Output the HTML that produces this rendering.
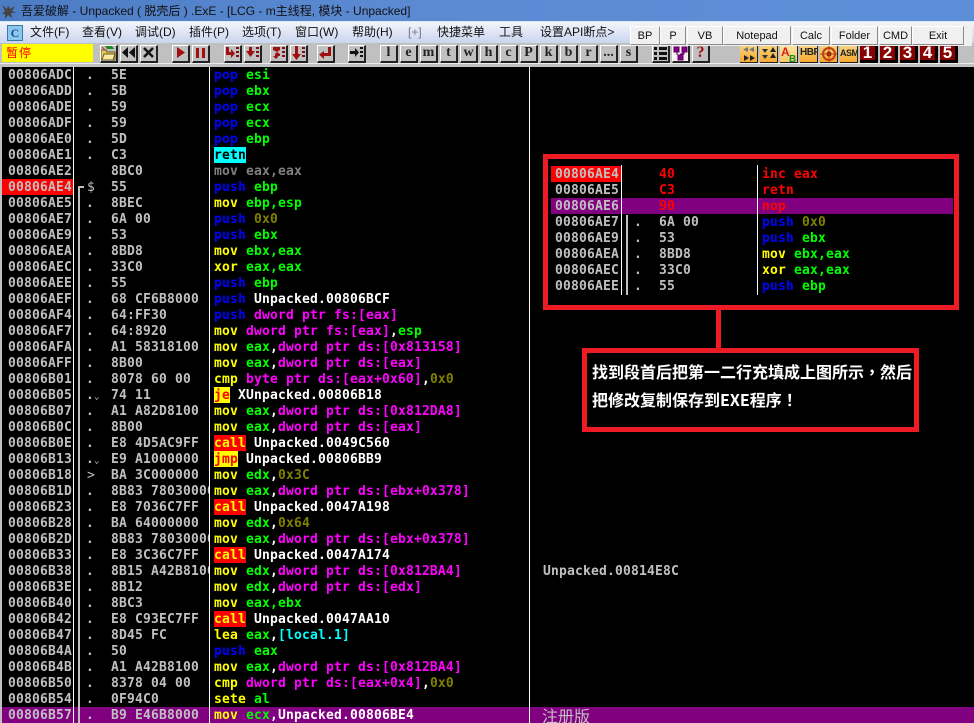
<!DOCTYPE html>
<html><head><meta charset="utf-8"><style>
html,body{margin:0;padding:0}
body{width:974px;height:723px;overflow:hidden;position:relative;background:#c0c0c0;font-family:"Liberation Sans","Noto Sans CJK SC",sans-serif}
.a{position:absolute}
#title{left:0;top:0;width:974px;height:21px;background:linear-gradient(90deg,#4c7cc4,#5b8ad2 40%,#5c8fd8);color:#111;font-size:12px;line-height:22px;white-space:pre}
#menu{left:0;top:21px;width:974px;height:22px;background:linear-gradient(#f2f5fb,#c9d5ef);border-top:1px solid #dfe8f5;box-sizing:border-box;font-size:12px;color:#111}
#menu span{position:absolute;top:1px;white-space:nowrap;line-height:18px}
#tb{left:0;top:43px;width:974px;height:24px;background:#c0c0c0}
#st{left:2px;top:44px;width:91px;height:18px;background:#ff0;color:#f00;font-size:12px;line-height:18px;text-indent:4px;letter-spacing:1px}
.btn{position:absolute;top:45px;width:18px;height:18px;box-sizing:border-box;background:#c0c0c0;border-style:solid;border-width:1px 2px 2px 1px;border-color:#fff #222 #222 #fff;font:bold 14px/14px "Liberation Serif",serif;color:#222;text-align:center;overflow:hidden}
.btn svg{position:absolute;left:0;top:0}
.ic{position:absolute;top:45px;width:18px;height:18px;box-sizing:border-box;background:linear-gradient(#f6d680,#f7a830);border-right:1px solid #222;border-bottom:1px solid #222;overflow:hidden;font:bold 10px/16px "Liberation Sans",sans-serif;letter-spacing:-.5px;color:#222;text-align:center}
.num{position:absolute;top:45px;width:18px;height:18px;box-sizing:border-box;background:#800;border-right:3px solid #000;border-bottom:3px solid #000;color:#fff;font:bold 17px/15px "Liberation Sans",sans-serif;text-align:center}
#bar{left:630px;top:25px;width:342px;height:21px;background:#f0f0f0}
.tbn{position:absolute;top:26px;height:19px;box-sizing:border-box;background:#f0f0f0;border:1px solid;border-color:#fff #8a8a8a #8a8a8a #fff;font-size:11px;line-height:19px;text-align:center;color:#111}
#main{left:2px;top:67px;width:972px;height:656px;background:#000;overflow:hidden}
.m,.m *{font-family:"DejaVu Sans Mono","Liberation Mono",monospace;font-weight:bold;font-size:13px;letter-spacing:.17px}
.r{position:absolute;left:0;width:972px;height:16px;line-height:18px;white-space:pre;color:#c0c0c0}
.r b{position:absolute;left:6px;top:0}
.r i{position:absolute;left:84px;top:0;font-style:normal}
.r u{position:absolute;left:109px;top:0;width:98px;height:16px;overflow:hidden;text-decoration:none}
.r em{position:absolute;left:212px;top:0;font-style:normal}
.g{color:#0f0}.l{color:#00f}.y{color:#ff0}.p{color:#f0f}.o{color:#808000}.c{color:#0ff}.w{color:#fff}.d{color:#808080}.e{color:#f00}
.cl{background:#f00;color:#ff0;display:inline-block;height:16px}
.jm{background:#ff0;color:#f00;display:inline-block;height:16px}
.rt{background:#0ff;color:#000;display:inline-block;height:16px}
.v{position:absolute;background:#fff;width:1px}
.box{position:absolute;box-sizing:border-box;border:5px solid #ed1c24}
</style></head><body>
<div class="a" id="title"><svg class="a" style="left:1px;top:3px" width="16" height="16" viewBox="0 0 16 16"><path d="M1 2l5 4 1-4 2 4 5-3-3 5 4 2-5 0 1 5-4-3-3 4 0-5-3 0 3-3z" fill="#444"/></svg><span class="a" style="left:21px;top:0">吾爱破解 - Unpacked ( 脱壳后 ) .ExE - [LCG - m主线程, 模块 - Unpacked]</span></div>
<div class="a" id="menu">
<svg class="a" style="left:7px;top:3px" width="16" height="16"><rect x=".5" y=".5" width="15" height="15" fill="#8cc8ec" stroke="#3a78b0"/><text x="8" y="12" font-family="Liberation Serif" font-weight="bold" font-size="12" text-anchor="middle" fill="#1a4a90">C</text></svg>
<span style="left:30px">文件(F)</span><span style="left:82px">查看(V)</span><span style="left:135px">调试(D)</span><span style="left:189px">插件(P)</span><span style="left:242px">选项(T)</span><span style="left:295px">窗口(W)</span><span style="left:352px">帮助(H)</span><span style="left:408px;color:#778">[+]</span><span style="left:437px">快捷菜单</span><span style="left:499px">工具</span><span style="left:540px">设置API断点&gt;</span>
</div>
<div class="a" id="tb"></div>
<div class="a" style="left:0;top:63px;width:974px;height:1px;background:#ececec"></div>
<div class="a" id="st">暂停</div>
<div class="btn" style="left:100px"><svg width="15" height="15"><path d="M0 4h5l1 2h8v8H0z" fill="#e8c860" stroke="#6a5a20"/><path d="M1 14l2-6h11l-2 6z" fill="#f8e8a0" stroke="#6a5a20"/><path d="M4 0h7l2 3H6z" fill="#1a8a20"/><path d="M1 1l3 3" stroke="#e02020"/></svg></div>
<div class="btn" style="left:120px"><svg width="15" height="15"><path d="M7 1v11L1 6.500zM14 1v11L8 6.500z" fill="#111"/></svg></div>
<div class="btn" style="left:140px"><svg width="15" height="15"><path d="M3 2l9 9M12 2l-9 9" stroke="#111" stroke-width="2.500"/></svg></div>
<div class="btn" style="left:172px"><svg width="15" height="15"><path d="M4 1v11l8-5.500z" fill="#a01010"/></svg></div>
<div class="btn" style="left:192px"><svg width="15" height="15"><path d="M3 2h3v10H3zM9 2h3v10H9z" fill="#a01010"/></svg></div>
<div class="btn" style="left:224px"><svg width="15" height="15"><path d="M1 1h3v5h2V3l4 4.500-4 4.500V9H1z" fill="#a01010"/><path d="M11 1h3v2h-3zM11 5h3v2h-3zM11 9h3v2h-3z" fill="#801010"/></svg></div>
<div class="btn" style="left:244px"><svg width="15" height="15"><path d="M4 1h3v4h3L5.500 11 1 5h3z" fill="#a01010"/><path d="M11 1h3v2h-3zM11 5h3v2h-3zM11 9h3v2h-3z" fill="#801010"/></svg></div>
<div class="btn" style="left:270px"><svg width="15" height="15"><path d="M2 1h7v3L6 6l3 2v2H7v1l-2 2-3-3h2V8l2-2-4-2z" fill="#a01010"/><path d="M11 1h3v2h-3zM11 5h3v2h-3zM11 9h3v2h-3z" fill="#801010"/></svg></div>
<div class="btn" style="left:290px"><svg width="15" height="15"><path d="M4 0h3v8h3l-4.500 6L1 8h3z" fill="#a01010"/><path d="M11 1h3v2h-3zM11 5h3v2h-3zM11 9h3v2h-3z" fill="#801010"/></svg></div>
<div class="btn" style="left:317px"><svg width="15" height="15"><path d="M10 1h3v9H6v3L1 8.500 6 5v2h4z" fill="#a01010"/></svg></div>
<div class="btn" style="left:348px"><svg width="15" height="15"><path d="M1 5h5V2l4 4.500L6 11V8H1z" fill="#111"/><path d="M11 1h3v2h-3zM11 5h3v2h-3zM11 9h3v2h-3z" fill="#111"/></svg></div>
<div class="btn" style="left:380px">l</div><div class="btn" style="left:400px">e</div><div class="btn" style="left:420px">m</div><div class="btn" style="left:440px">t</div><div class="btn" style="left:460px">w</div><div class="btn" style="left:480px">h</div><div class="btn" style="left:500px">c</div><div class="btn" style="left:520px">P</div><div class="btn" style="left:540px">k</div><div class="btn" style="left:560px">b</div><div class="btn" style="left:580px">r</div><div class="btn" style="left:600px">...</div><div class="btn" style="left:620px">s</div>
<div class="btn" style="left:652px"><svg width="15" height="15"><path d="M1 1h3v3H1zM6 1h8v3H6zM1 6h3v3H1zM6 6h8v3H6zM1 11h3v3H1zM6 11h8v3H6z" fill="#111"/></svg></div>
<div class="btn" style="left:672px;background:#f4f0f4"><svg width="15" height="15"><path d="M1 1h5v5H1zM9 1h5v5H9zM5 9h5v5H5zM4 6v3M11 6v2H7" fill="#800080" stroke="#600060"/></svg></div>
<div class="btn" style="left:692px;color:#a01010;font-size:16px">?</div>
<div class="ic" style="left:740px"><svg width="18" height="18"><path d="M8 2v5L3 4.500zM14 2v5L9 4.500z" fill="#777"/><path d="M4 10v6l5-3zM10 10v6l5-3z" fill="#222"/></svg></div>
<div class="ic" style="left:760px"><svg width="18" height="18"><path d="M2 4h6l-3 4zM2 10h6l-3 4z" fill="#333"/><path d="M13 2l3 5h-6zM13 8l3 5h-6z" fill="#222"/></svg></div>
<div class="ic" style="left:780px;background:linear-gradient(#fbe6a8,#f7c860)"><svg width="18" height="18"><text x="1" y="11" font-family="Liberation Sans" font-size="12" fill="#e02020">A</text><text x="9" y="17" font-family="Liberation Sans" font-weight="bold" font-size="10" fill="#109030">B</text></svg></div>
<div class="ic" style="left:800px">HBP</div>
<div class="ic" style="left:820px"><svg width="18" height="18"><circle cx="9" cy="9" r="6" fill="none" stroke="#c04010" stroke-width="2"/><circle cx="9" cy="9" r="2.500" fill="#701000"/><path d="M0 9h18M9 1v16" stroke="#c04010"/></svg></div>
<div class="ic" style="left:840px;font-size:9px">ASM</div>
<div class="num" style="left:860px">1</div><div class="num" style="left:880px">2</div><div class="num" style="left:900px">3</div><div class="num" style="left:920px">4</div><div class="num" style="left:940px">5</div>
<div class="a" id="bar"></div>
<div class="tbn" style="left:630px;width:30px">BP</div><div class="tbn" style="left:660px;width:26px">P</div><div class="tbn" style="left:687px;width:36px">VB</div><div class="tbn" style="left:723px;width:68px">Notepad</div><div class="tbn" style="left:792px;width:38px">Calc</div><div class="tbn" style="left:831px;width:47px">Folder</div><div class="tbn" style="left:879px;width:33px">CMD</div><div class="tbn" style="left:912px;width:52px">Exit</div>

<div class="a m" id="main">
<div class="a" style="left:0;top:112px;width:71px;height:16px;background:#f00"></div>
<div class="a" style="left:0;top:640px;width:972px;height:16px;background:#800080"></div>
<div class="v" style="left:71px;top:0;height:656px"></div>
<div class="v" style="left:207px;top:0;height:656px"></div>
<div class="v" style="left:527px;top:0;height:656px"></div>
<div class="a" style="left:76px;top:119px;width:2px;height:537px;background:#c0c0c0"></div>
<div class="a" style="left:76px;top:119px;width:6px;height:2px;background:#c0c0c0"></div>

<div class="r" style="top:0"><b>00806ADC</b><i>.</i><u>5E</u><em><span class="l">pop</span> <span class="g">esi</span></em></div>
<div class="r" style="top:16px"><b>00806ADD</b><i>.</i><u>5B</u><em><span class="l">pop</span> <span class="g">ebx</span></em></div>
<div class="r" style="top:32px"><b>00806ADE</b><i>.</i><u>59</u><em><span class="l">pop</span> <span class="g">ecx</span></em></div>
<div class="r" style="top:48px"><b>00806ADF</b><i>.</i><u>59</u><em><span class="l">pop</span> <span class="g">ecx</span></em></div>
<div class="r" style="top:64px"><b>00806AE0</b><i>.</i><u>5D</u><em><span class="l">pop</span> <span class="g">ebp</span></em></div>
<div class="r" style="top:80px"><b>00806AE1</b><i>.</i><u>C3</u><em><span class="rt">retn</span></em></div>
<div class="r" style="top:96px"><b>00806AE2</b><u>8BC0</u><em><span class="d">mov eax,eax</span></em></div>
<div class="r" style="top:112px"><b>00806AE4</b><i style="left:85px;font-weight:normal">$</i><u>55</u><em><span class="l">push</span> <span class="g">ebp</span></em></div>
<div class="r" style="top:128px"><b>00806AE5</b><i>.</i><u>8BEC</u><em><span class="y">mov</span> <span class="g">ebp,esp</span></em></div>
<div class="r" style="top:144px"><b>00806AE7</b><i>.</i><u>6A 00</u><em><span class="l">push</span> <span class="o">0x0</span></em></div>
<div class="r" style="top:160px"><b>00806AE9</b><i>.</i><u>53</u><em><span class="l">push</span> <span class="g">ebx</span></em></div>
<div class="r" style="top:176px"><b>00806AEA</b><i>.</i><u>8BD8</u><em><span class="y">mov</span> <span class="g">ebx,eax</span></em></div>
<div class="r" style="top:192px"><b>00806AEC</b><i>.</i><u>33C0</u><em><span class="y">xor</span> <span class="g">eax,eax</span></em></div>
<div class="r" style="top:208px"><b>00806AEE</b><i>.</i><u>55</u><em><span class="l">push</span> <span class="g">ebp</span></em></div>
<div class="r" style="top:224px"><b>00806AEF</b><i>.</i><u>68 CF6B8000</u><em><span class="l">push</span> <span class="w">Unpacked.00806BCF</span></em></div>
<div class="r" style="top:240px"><b>00806AF4</b><i>.</i><u>64:FF30</u><em><span class="l">push</span> <span class="p">dword ptr fs:[eax]</span></em></div>
<div class="r" style="top:256px"><b>00806AF7</b><i>.</i><u>64:8920</u><em><span class="y">mov</span> <span class="p">dword ptr fs:[eax]</span><span class="w">,</span><span class="g">esp</span></em></div>
<div class="r" style="top:272px"><b>00806AFA</b><i>.</i><u>A1 58318100</u><em><span class="y">mov</span> <span class="g">eax</span><span class="w">,</span><span class="p">dword ptr ds:[0x813158]</span></em></div>
<div class="r" style="top:288px"><b>00806AFF</b><i>.</i><u>8B00</u><em><span class="y">mov</span> <span class="g">eax</span><span class="w">,</span><span class="p">dword ptr ds:[eax]</span></em></div>
<div class="r" style="top:304px"><b>00806B01</b><i>.</i><u>8078 60 00</u><em><span class="y">cmp</span> <span class="p">byte ptr ds:[eax+0x60]</span><span class="w">,</span><span class="o">0x0</span></em></div>
<div class="r" style="top:320px"><b>00806B05</b><i>.<span style="font-size:9px;font-weight:normal">⌄</span></i><u>74 11</u><em><span class="jm">je</span> <span class="w">XUnpacked.00806B18</span></em></div>
<div class="r" style="top:336px"><b>00806B07</b><i>.</i><u>A1 A82D8100</u><em><span class="y">mov</span> <span class="g">eax</span><span class="w">,</span><span class="p">dword ptr ds:[0x812DA8]</span></em></div>
<div class="r" style="top:352px"><b>00806B0C</b><i>.</i><u>8B00</u><em><span class="y">mov</span> <span class="g">eax</span><span class="w">,</span><span class="p">dword ptr ds:[eax]</span></em></div>
<div class="r" style="top:368px"><b>00806B0E</b><i>.</i><u>E8 4D5AC9FF</u><em><span class="cl">call</span> <span class="w">Unpacked.0049C560</span></em></div>
<div class="r" style="top:384px"><b>00806B13</b><i>.<span style="font-size:9px;font-weight:normal">⌄</span></i><u>E9 A1000000</u><em><span class="jm">jmp</span> <span class="w">Unpacked.00806BB9</span></em></div>
<div class="r" style="top:400px"><b>00806B18</b><i style="font-weight:normal;left:85px">&gt;</i><u>BA 3C000000</u><em><span class="y">mov</span> <span class="g">edx</span><span class="w">,</span><span class="o">0x3C</span></em></div>
<div class="r" style="top:416px"><b>00806B1D</b><i>.</i><u>8B83 78030000</u><em><span class="y">mov</span> <span class="g">eax</span><span class="w">,</span><span class="p">dword ptr ds:[ebx+0x378]</span></em></div>
<div class="r" style="top:432px"><b>00806B23</b><i>.</i><u>E8 7036C7FF</u><em><span class="cl">call</span> <span class="w">Unpacked.0047A198</span></em></div>
<div class="r" style="top:448px"><b>00806B28</b><i>.</i><u>BA 64000000</u><em><span class="y">mov</span> <span class="g">edx</span><span class="w">,</span><span class="o">0x64</span></em></div>
<div class="r" style="top:464px"><b>00806B2D</b><i>.</i><u>8B83 78030000</u><em><span class="y">mov</span> <span class="g">eax</span><span class="w">,</span><span class="p">dword ptr ds:[ebx+0x378]</span></em></div>
<div class="r" style="top:480px"><b>00806B33</b><i>.</i><u>E8 3C36C7FF</u><em><span class="cl">call</span> <span class="w">Unpacked.0047A174</span></em></div>
<div class="r" style="top:496px"><b>00806B38</b><i>.</i><u>8B15 A42B8100</u><em><span class="y">mov</span> <span class="g">edx</span><span class="w">,</span><span class="p">dword ptr ds:[0x812BA4]</span></em></div>
<div class="r" style="top:512px"><b>00806B3E</b><i>.</i><u>8B12</u><em><span class="y">mov</span> <span class="g">edx</span><span class="w">,</span><span class="p">dword ptr ds:[edx]</span></em></div>
<div class="r" style="top:528px"><b>00806B40</b><i>.</i><u>8BC3</u><em><span class="y">mov</span> <span class="g">eax,ebx</span></em></div>
<div class="r" style="top:544px"><b>00806B42</b><i>.</i><u>E8 C93EC7FF</u><em><span class="cl">call</span> <span class="w">Unpacked.0047AA10</span></em></div>
<div class="r" style="top:560px"><b>00806B47</b><i>.</i><u>8D45 FC</u><em><span class="y">lea</span> <span class="g">eax</span><span class="w">,</span><span class="c">[local.1]</span></em></div>
<div class="r" style="top:576px"><b>00806B4A</b><i>.</i><u>50</u><em><span class="l">push</span> <span class="g">eax</span></em></div>
<div class="r" style="top:592px"><b>00806B4B</b><i>.</i><u>A1 A42B8100</u><em><span class="y">mov</span> <span class="g">eax</span><span class="w">,</span><span class="p">dword ptr ds:[0x812BA4]</span></em></div>
<div class="r" style="top:608px"><b>00806B50</b><i>.</i><u>8378 04 00</u><em><span class="y">cmp</span> <span class="p">dword ptr ds:[eax+0x4]</span><span class="w">,</span><span class="o">0x0</span></em></div>
<div class="r" style="top:624px"><b>00806B54</b><i>.</i><u>0F94C0</u><em><span class="y">sete</span> <span class="g">al</span></em></div>
<div class="r" style="top:640px"><b>00806B57</b><i>.</i><u>B9 E46B8000</u><em><span class="y">mov</span> <span class="g">ecx</span><span class="w">,Unpacked.00806BE4</span></em></div>
<div class="r" style="top:496px;left:541px;width:200px;font-weight:bold">Unpacked.00814E8C</div>
<div class="a" style="left:540px;top:640px;height:16px;color:#c0c0c0;font:16px/16px 'Noto Sans CJK SC',sans-serif;letter-spacing:0;font-weight:normal">注册版</div>
</div>

<div class="box" style="left:543px;top:154px;width:416px;height:156px"></div>
<div class="a m" style="left:551px;top:166px;width:402px;height:128px;background:#000">
<div class="a" style="left:0;top:0;width:70px;height:16px;background:#f00"></div>
<div class="a" style="left:0;top:32px;width:402px;height:16px;background:#800080"></div>
<div class="v" style="left:70px;top:-1px;height:130px"></div>
<div class="v" style="left:206px;top:-1px;height:130px"></div>
<div class="a" style="left:75px;top:49px;width:2px;height:80px;background:#c0c0c0"></div>
<div class="r" style="top:0"><b style="left:4px">00806AE4</b><u style="left:108px"><span class="e">40</span></u><em style="left:211px"><span class="e">inc eax</span></em></div>
<div class="r" style="top:16px"><b style="left:4px">00806AE5</b><u style="left:108px"><span class="e">C3</span></u><em style="left:211px"><span class="e">retn</span></em></div>
<div class="r" style="top:32px"><b style="left:4px">00806AE6</b><u style="left:108px"><span class="e">90</span></u><em style="left:211px"><span class="e">nop</span></em></div>
<div class="r" style="top:48px"><b style="left:4px">00806AE7</b><i style="left:83px">.</i><u style="left:108px">6A 00</u><em style="left:211px"><span class="l">push</span> <span class="o">0x0</span></em></div>
<div class="r" style="top:64px"><b style="left:4px">00806AE9</b><i style="left:83px">.</i><u style="left:108px">53</u><em style="left:211px"><span class="l">push</span> <span class="g">ebx</span></em></div>
<div class="r" style="top:80px"><b style="left:4px">00806AEA</b><i style="left:83px">.</i><u style="left:108px">8BD8</u><em style="left:211px"><span class="y">mov</span> <span class="g">ebx,eax</span></em></div>
<div class="r" style="top:96px"><b style="left:4px">00806AEC</b><i style="left:83px">.</i><u style="left:108px">33C0</u><em style="left:211px"><span class="y">xor</span> <span class="g">eax,eax</span></em></div>
<div class="r" style="top:112px"><b style="left:4px">00806AEE</b><i style="left:83px">.</i><u style="left:108px">55</u><em style="left:211px"><span class="l">push</span> <span class="g">ebp</span></em></div>
</div>
<div class="a" style="left:716px;top:309px;width:5px;height:40px;background:#ed1c24"></div>
<div class="box" style="left:582px;top:348px;width:337px;height:84px;background:#000"></div>
<div class="a" style="left:592px;top:357px;width:324px;color:#fff;font:bold 16px/28px 'Noto Sans CJK SC',sans-serif;white-space:nowrap">找到段首后把第一二行充填成上图所示<span style="font-family:'Noto Sans CJK TC',sans-serif">，</span>然后<br>把修改复制保存到EXE程序<span style="font-family:'Noto Sans CJK TC',sans-serif">！</span></div>
</body></html>
